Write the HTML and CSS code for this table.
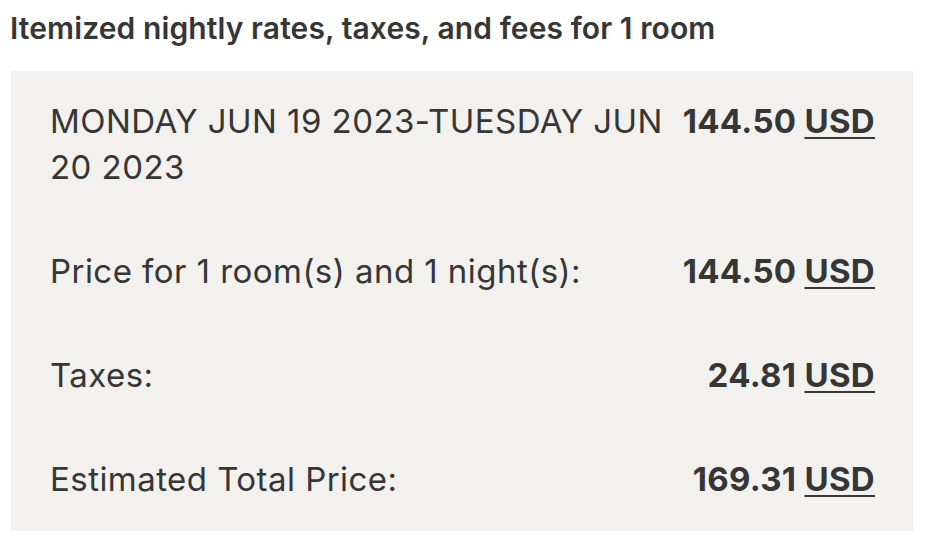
FILE: index.html
```html
<!DOCTYPE html>
<html lang="en">
<head>
  <meta charset="UTF-8" />
  <meta name="viewport" content="width=device-width, initial-scale=1.0"/>
  <title>Rate details</title>
  <link rel="stylesheet" href="styles.css">
</head>
<body>

  <h3 class="title">Itemized nightly rates, taxes, and fees for 1 room</h3>

  <div class="rates">
    <div class="row">
      <div class="label">MONDAY JUN 19 2023-TUESDAY JUN 20 2023</div>
      <div class="amount">144.50 <a href="#">USD</a></div>
    </div>
    <div class="row">
      <div class="label">Price for 1 room(s) and 1 night(s):</div>
      <div class="amount">144.50 <a href="#">USD</a></div>
    </div>
    <div class="row">
      <div class="label">Taxes:</div>
      <div class="amount">24.81 <a href="#">USD</a></div>
    </div>
    <div class="row">
      <div class="label">Estimated Total Price:</div>
      <div class="amount">169.31 <a href="#">USD</a></div>
    </div>
  </div>

</body>
</html>
```
FILE: styles.css
```css
body {
  margin: 0;
  padding: 10px 23px 0 11px;
  font-family: Inter, "Noto Sans", sans-serif;
  color: #363636;
  background: #fff;
}
.title {
  margin: 0 0 25px -1px;
  font-size: 30px;
  font-weight: 600;
  line-height: 36px;
  letter-spacing: 0.1px;
}
.rates {
  background-color: #f2f1ed;
  padding: 0 38px 0 39px;
}
.row {
  display: flex;
  justify-content: space-between;
  align-items: flex-start;
  gap: 18px;
  padding: 29px 0 29px;
  font-size: 33px;
  line-height: 46px;
  letter-spacing: 0.45px;
}
.row:first-child {
  padding-top: 27px;
}
.label {
  flex: 1;
}
.amount {
  font-weight: 700;
  white-space: nowrap;
  letter-spacing: 0.3px;
}
.amount a {
  color: #363636;
  text-decoration: underline;
  text-decoration-thickness: 2px;
  text-underline-offset: 4px;
}
```
